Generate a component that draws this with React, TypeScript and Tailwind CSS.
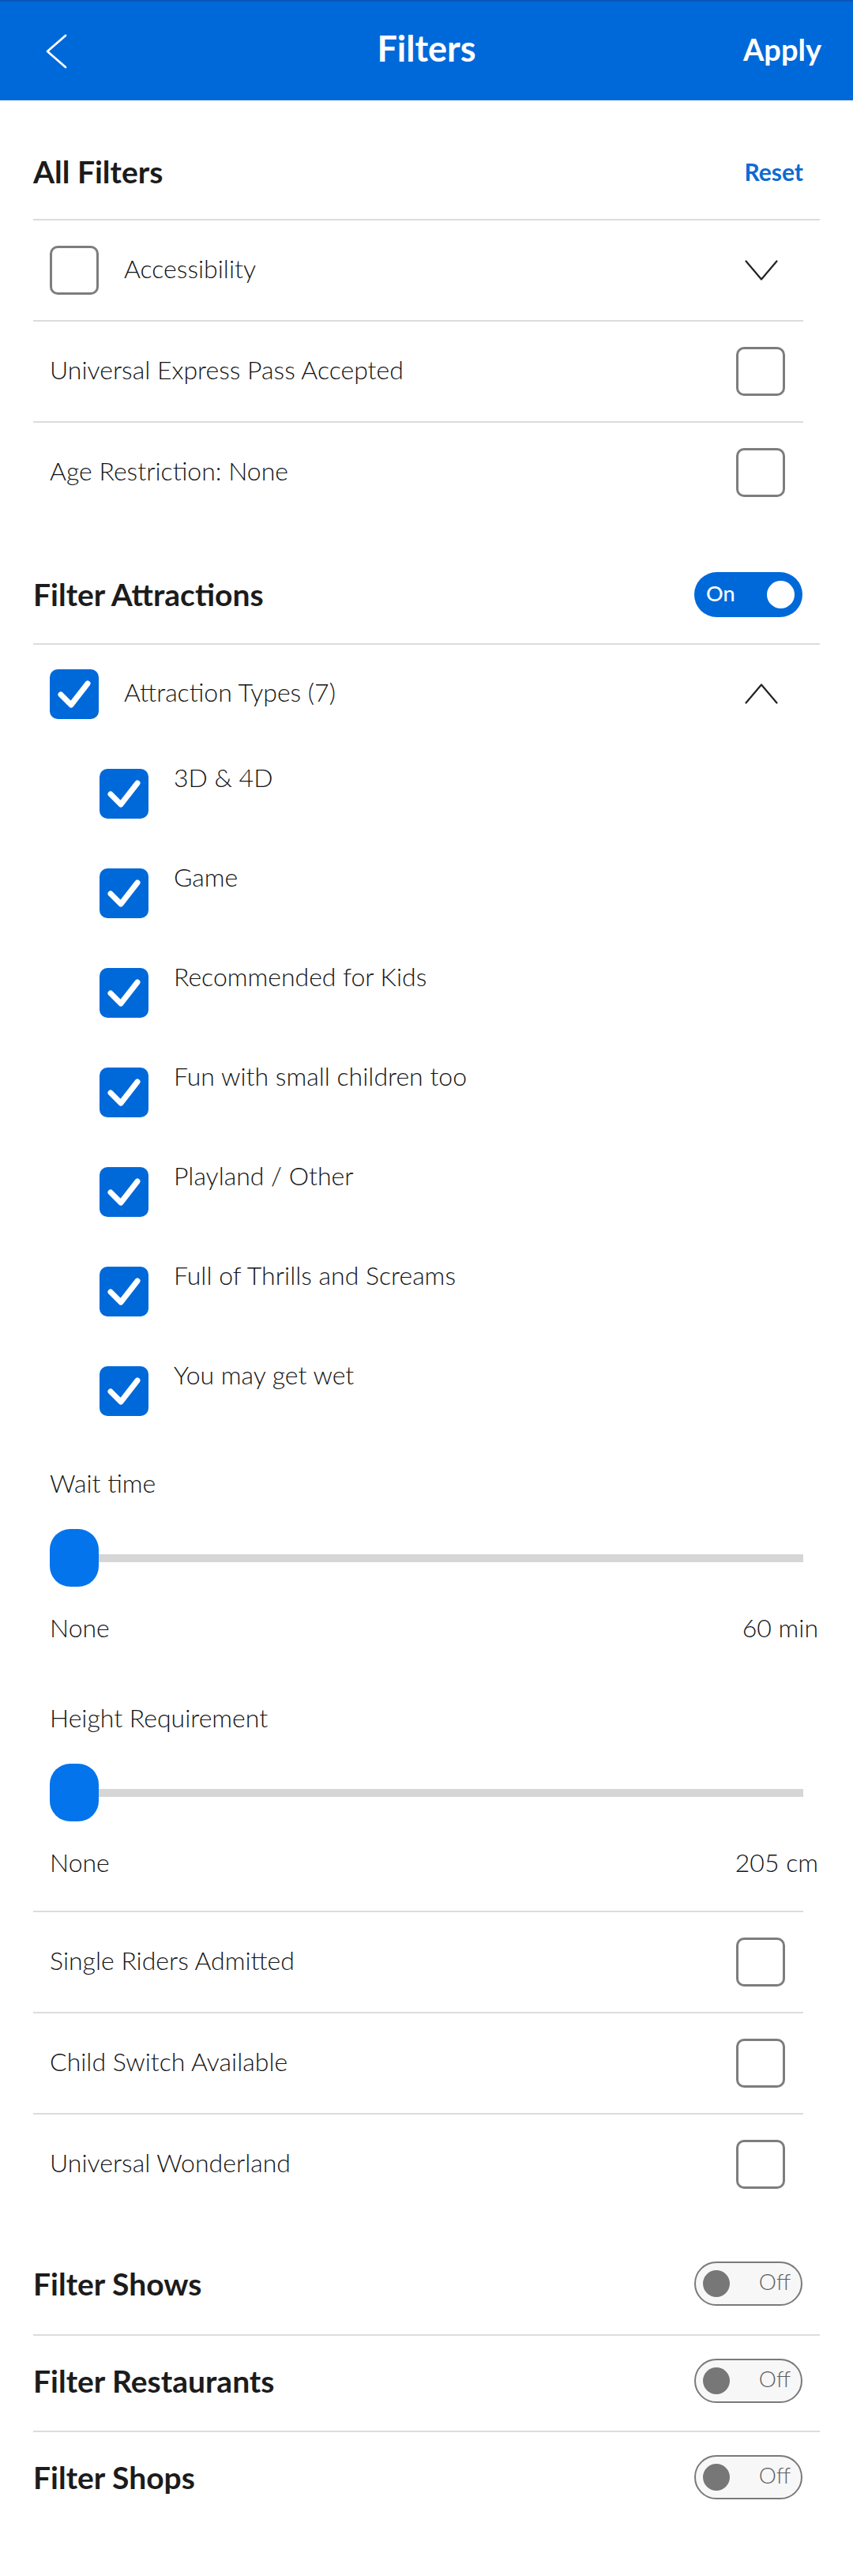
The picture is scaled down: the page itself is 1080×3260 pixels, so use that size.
import React from "react";

const BLUE = "bg-[#0069d9]";

function Divider({ short }: { short?: boolean }) {
  return <div className={short ? "ml-[42px] mr-[63px] h-[2px] bg-[#dcdcdc]" : "mx-[42px] h-[2px] bg-[#dcdcdc]"} />;
}

function EmptyBox() {
  return <div className="w-[62px] h-[62px] shrink-0 rounded-[10px] border-[3px] border-[#7d7d7d] bg-white" />;
}

function CheckedBox() {
  return (
    <div className={`w-[62px] h-[63px] shrink-0 rounded-[10px] ${BLUE} flex items-center justify-center`}>
      <svg width="62" height="63" viewBox="0 0 62 63">
        <path d="M14 32 L27 45 L48 18" stroke="white" strokeWidth="7" fill="none" strokeLinecap="round" strokeLinejoin="round" />
      </svg>
    </div>
  );
}

function ChevronDown({ up }: { up?: boolean }) {
  return (
    <svg width="42" height="26" viewBox="0 0 42 26" className="shrink-0">
      <path d={up ? "M1.5 24.5 L21 1.5 L40.5 24.5" : "M1.5 1.5 L21 24.5 L40.5 1.5"} stroke="#222" strokeWidth="2.2" fill="none" strokeLinecap="round" strokeLinejoin="round" />
    </svg>
  );
}

function ToggleOn() {
  return (
    <div className={`w-[137px] h-[57px] shrink-0 rounded-full ${BLUE} flex items-center justify-between pl-[15px] pr-[10px]`}>
      <span className="text-white text-[27px] font-medium leading-none -mt-[3px]">On</span>
      <div className="w-[35px] h-[35px] rounded-full bg-white" />
    </div>
  );
}

function ToggleOff() {
  return (
    <div className="w-[137px] h-[56px] shrink-0 rounded-full border-2 border-[#7a7a7a] bg-[#f7f7f7] flex items-center justify-between pl-[9px] pr-[13px]">
      <div className="w-[34px] h-[34px] rounded-full bg-[#777777]" />
      <span className="text-[#5e5e5e] text-[28px] font-light leading-none -mt-[6px]">Off</span>
    </div>
  );
}

function RightCheckRow({ label }: { label: string }) {
  return (
    <div className="ml-[42px] mr-[63px] h-[126px] pl-[21px] pr-[23px] flex items-center justify-between">
      <span className="text-[32px] font-light leading-[36px] -mt-[4px]">{label}</span>
      <EmptyBox />
    </div>
  );
}

function SectionTitle({ children }: { children: React.ReactNode }) {
  return <h2 className="text-[39px] font-bold leading-[46px] text-[#1c1c1c]">{children}</h2>;
}

function Slider({ label, max }: { label: string; max: string }) {
  return (
    <div>
      <div className="ml-[63px] text-[32px] font-light leading-[36px]">{label}</div>
      <div className="relative ml-[63px] mr-[63px] h-[73px] mt-[40px] flex items-center">
        <div className="w-full h-[10px] bg-[#d6d6d6]" />
        <div className="absolute left-0 top-0 w-[62px] h-[73px] rounded-[26px] bg-[#0474ec]" />
      </div>
      <div className="ml-[63px] mr-[44px] mt-[34px] flex justify-between text-[32px] font-light leading-[36px]">
        <span>None</span>
        <span>{max}</span>
      </div>
    </div>
  );
}

const TYPES = [
  "3D & 4D",
  "Game",
  "Recommended for Kids",
  "Fun with small children too",
  "Playland / Other",
  "Full of Thrills and Screams",
  "You may get wet",
];

export default function App() {
  return (
    <div className="min-h-[3260px] bg-white font-['Lato',sans-serif] text-[#141414]">
      <header className={`h-[127px] ${BLUE} border-t-2 border-[#0a55b5] grid grid-cols-[1fr_auto_1fr] items-center`}>
        <div className="pl-[57px] flex items-center">
          <svg width="28" height="44" viewBox="0 0 28 44">
            <path d="M26 2 L3 22 L26 42" stroke="white" strokeWidth="2.8" fill="none" strokeLinecap="round" strokeLinejoin="round" />
          </svg>
        </div>
        <h1 className="text-white text-[45px] font-bold leading-none -mt-[6px]">Filters</h1>
        <div className="justify-self-end pr-[40px] text-white text-[38px] font-bold leading-none -mt-[6px]">Apply</div>
      </header>

      <div className="mx-[42px] h-[150px] pt-[30px] pr-[21px] flex items-center justify-between">
        <SectionTitle>All Filters</SectionTitle>
        <span className="text-[30px] font-bold text-[#0b6bd2]">Reset</span>
      </div>
      <Divider />
      <div className="ml-[42px] mr-[63px] h-[126px] pl-[21px] pr-[32px] flex items-center">
        <EmptyBox />
        <span className="ml-[32px] -mt-[4px] flex-1 text-[32px] font-light leading-[36px]">Accessibility</span>
        <ChevronDown />
      </div>
      <Divider short />
      <RightCheckRow label="Universal Express Pass Accepted" />
      <Divider short />
      <RightCheckRow label="Age Restriction: None" />

      <div className="mx-[42px] h-[153px] pt-[29px] pr-[22px] flex items-center justify-between">
        <SectionTitle>Filter Attractions</SectionTitle>
        <ToggleOn />
      </div>
      <Divider />
      <div className="ml-[42px] mr-[63px] h-[124px] pl-[21px] pr-[32px] flex items-center">
        <CheckedBox />
        <span className="ml-[32px] -mt-[4px] flex-1 text-[32px] font-light leading-[36px]">Attraction Types (7)</span>
        <ChevronDown up />
      </div>
      <div className="pl-[126px] pt-[33px] flex flex-col gap-[63px]">
        {TYPES.map((t) => (
          <div key={t} className="flex items-start">
            <CheckedBox />
            <span className="ml-[32px] -mt-[7px] text-[32px] font-light leading-[36px]">{t}</span>
          </div>
        ))}
      </div>

      <div className="mt-[67px]">
        <Slider label="Wait time" max="60 min" />
      </div>
      <div className="mt-[78px]">
        <Slider label="Height Requirement" max="205 cm" />
      </div>

      <div className="mt-[43px]">
        <Divider short />
      </div>
      <RightCheckRow label="Single Riders Admitted" />
      <Divider short />
      <RightCheckRow label="Child Switch Available" />
      <Divider short />
      <RightCheckRow label="Universal Wonderland" />

      <div className="mx-[42px] h-[152px] pt-[24px] pr-[22px] flex items-center justify-between">
        <SectionTitle>Filter Shows</SectionTitle>
        <ToggleOff />
      </div>
      <Divider />
      <div className="mx-[42px] h-[120px] pb-[6px] pr-[22px] flex items-center justify-between">
        <SectionTitle>Filter Restaurants</SectionTitle>
        <ToggleOff />
      </div>
      <Divider />
      <div className="mx-[42px] h-[120px] pb-[6px] pr-[22px] flex items-center justify-between">
        <SectionTitle>Filter Shops</SectionTitle>
        <ToggleOff />
      </div>
    </div>
  );
}
